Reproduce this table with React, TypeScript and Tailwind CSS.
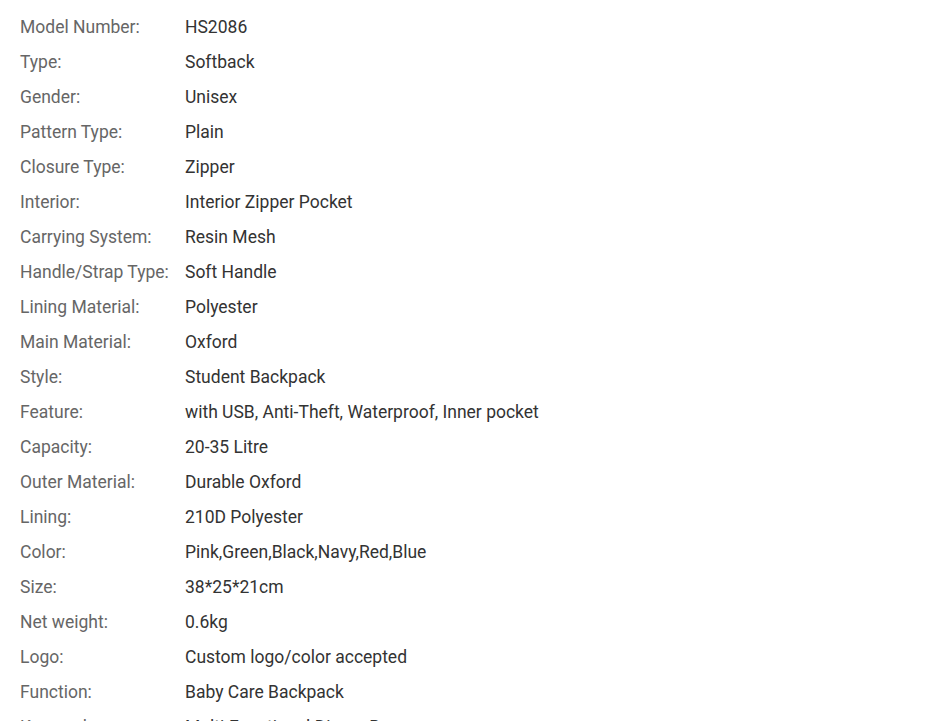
import React from 'react';

const specs: [string, string][] = [
  ['Model Number:', 'HS2086'],
  ['Type:', 'Softback'],
  ['Gender:', 'Unisex'],
  ['Pattern Type:', 'Plain'],
  ['Closure Type:', 'Zipper'],
  ['Interior:', 'Interior Zipper Pocket'],
  ['Carrying System:', 'Resin Mesh'],
  ['Handle/Strap Type:', 'Soft Handle'],
  ['Lining Material:', 'Polyester'],
  ['Main Material:', 'Oxford'],
  ['Style:', 'Student Backpack'],
  ['Feature:', 'with USB, Anti-Theft, Waterproof, Inner pocket'],
  ['Capacity:', '20-35 Litre'],
  ['Outer Material:', 'Durable Oxford'],
  ['Lining:', '210D Polyester'],
  ['Color:', 'Pink,Green,Black,Navy,Red,Blue'],
  ['Size:', '38*25*21cm'],
  ['Net weight:', '0.6kg'],
  ['Logo:', 'Custom logo/color accepted'],
  ['Function:', 'Baby Care Backpack'],
  ['Keywords:', 'Multi-Functional Diaper Bag'],
];

export default function App() {
  return (
    <div className="h-[721px] overflow-hidden bg-white pl-5 pt-[10px] font-['Roboto',sans-serif] text-[17.5px]">
      {specs.map(([label, value]) => (
        <div key={label} className="flex h-[35px] items-center">
          <span className="w-[165px] shrink-0 whitespace-nowrap text-[#666]">{label}</span>
          <span className="whitespace-nowrap text-[#333]">{value}</span>
        </div>
      ))}
    </div>
  );
}
